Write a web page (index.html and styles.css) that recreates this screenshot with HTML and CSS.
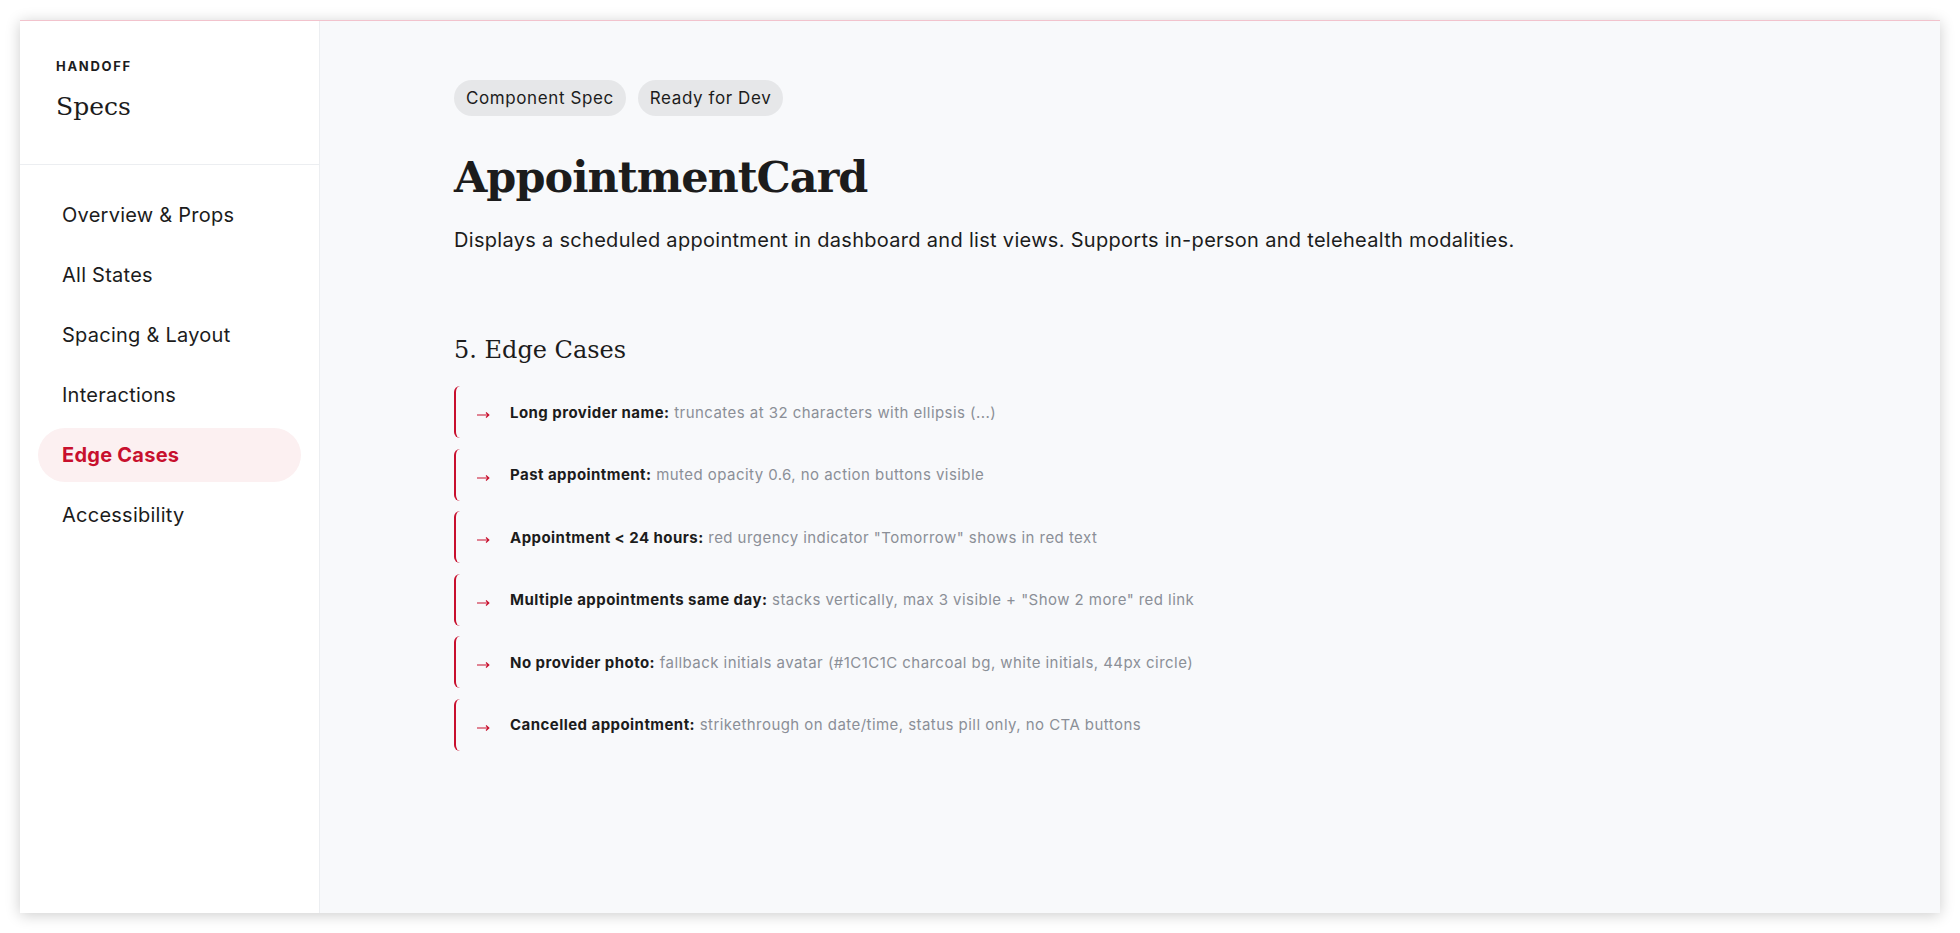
FILE: index.html
```html
<!DOCTYPE html>
<html lang="en">
<head>
    <meta charset="UTF-8">
    <meta name="viewport" content="width=device-width, initial-scale=1.0">
    <title>Handoff Specs - AppointmentCard</title>
    <link rel="stylesheet" href="styles.css">
</head>
<body>
    <div class="frame">
        <aside class="sidebar">
            <div class="brand">
                <div class="brand-label">HANDOFF</div>
                <div class="brand-title">Specs</div>
            </div>
            <nav class="nav">
                <a class="nav-item" href="#">Overview &amp; Props</a>
                <a class="nav-item" href="#">All States</a>
                <a class="nav-item" href="#">Spacing &amp; Layout</a>
                <a class="nav-item" href="#">Interactions</a>
                <a class="nav-item active" href="#">Edge Cases</a>
                <a class="nav-item" href="#">Accessibility</a>
            </nav>
        </aside>

        <main class="main">
            <div class="tags">
                <span class="tag">Component Spec</span>
                <span class="tag">Ready for Dev</span>
            </div>
            <h1>AppointmentCard</h1>
            <p class="lead">Displays a scheduled appointment in dashboard and list views. Supports in-person and telehealth modalities.</p>

            <section class="section">
                <h2>5. Edge Cases</h2>
                <ul class="cases">
                    <li class="case">
                        <svg class="arrow" width="13" height="8" viewBox="0 0 13 8"><path d="M0 4h11.5M9 1.5 11.8 4 9 6.5" /></svg>
                        <p><strong>Long provider name:</strong> truncates at 32 characters with ellipsis (...)</p>
                    </li>
                    <li class="case">
                        <svg class="arrow" width="13" height="8" viewBox="0 0 13 8"><path d="M0 4h11.5M9 1.5 11.8 4 9 6.5" /></svg>
                        <p><strong>Past appointment:</strong> muted opacity 0.6, no action buttons visible</p>
                    </li>
                    <li class="case">
                        <svg class="arrow" width="13" height="8" viewBox="0 0 13 8"><path d="M0 4h11.5M9 1.5 11.8 4 9 6.5" /></svg>
                        <p><strong>Appointment &lt; 24 hours:</strong> red urgency indicator "Tomorrow" shows in red text</p>
                    </li>
                    <li class="case">
                        <svg class="arrow" width="13" height="8" viewBox="0 0 13 8"><path d="M0 4h11.5M9 1.5 11.8 4 9 6.5" /></svg>
                        <p><strong>Multiple appointments same day:</strong> stacks vertically, max 3 visible + "Show 2 more" red link</p>
                    </li>
                    <li class="case">
                        <svg class="arrow" width="13" height="8" viewBox="0 0 13 8"><path d="M0 4h11.5M9 1.5 11.8 4 9 6.5" /></svg>
                        <p><strong>No provider photo:</strong> fallback initials avatar (#1C1C1C charcoal bg, white initials, 44px circle)</p>
                    </li>
                    <li class="case">
                        <svg class="arrow" width="13" height="8" viewBox="0 0 13 8"><path d="M0 4h11.5M9 1.5 11.8 4 9 6.5" /></svg>
                        <p><strong>Cancelled appointment:</strong> strikethrough on date/time, status pill only, no CTA buttons</p>
                    </li>
                </ul>
            </section>
        </main>
    </div>
</body>
</html>
```

FILE: styles.css
```css
body {
    margin: 0;
    padding: 20px;
    background: #ffffff;
    font-family: Inter, "Noto Sans", sans-serif;
    color: #1c1c1c;
}

.frame {
    display: flex;
    height: 892px;
    border-top: 1px solid #f2c3cd;
    background: #f8f9fb;
    box-shadow: 0 2px 14px rgba(0, 0, 0, 0.2);
}

.sidebar {
    width: 299px;
    flex-shrink: 0;
    background: #ffffff;
    border-right: 1px solid #eceef1;
}

.brand {
    height: 106px;
    padding: 37px 36px 0;
    border-bottom: 1px solid #eceef1;
}

.brand-label {
    font-size: 13px;
    font-weight: 700;
    letter-spacing: 1.7px;
    line-height: 16px;
}

.brand-title {
    margin-top: 18px;
    font-family: "DejaVu Serif", serif;
    font-size: 25px;
    line-height: 30px;
}

.nav {
    display: flex;
    flex-direction: column;
    gap: 6px;
    padding: 23px 18px;
}

.nav-item {
    display: block;
    height: 54px;
    line-height: 54px;
    padding: 0 24px;
    border-radius: 27px;
    font-size: 20px;
    letter-spacing: 0.25px;
    color: #1c1c1c;
    text-decoration: none;
}

.nav-item.active {
    background: #fcf0f1;
    color: #c8102e;
    font-weight: 700;
}

.main {
    flex: 1;
    padding: 59px 134px;
}

.tags {
    display: flex;
    gap: 12px;
}

.tag {
    height: 36px;
    line-height: 36px;
    padding: 0 12px;
    border-radius: 18px;
    background: #e6e7e9;
    font-size: 17px;
    letter-spacing: 0.6px;
}

h1 {
    margin: 33px 0 0;
    font-family: "DejaVu Serif", serif;
    font-size: 43px;
    font-weight: 700;
    line-height: 56px;
    letter-spacing: -1px;
}

.lead {
    margin: 21px 0 0;
    font-size: 20px;
    letter-spacing: 0.3px;
    line-height: 28px;
}

.section {
    margin-top: 79px;
}

h2 {
    margin: 0;
    font-family: "DejaVu Serif", serif;
    font-size: 24px;
    font-weight: 400;
    line-height: 34px;
}

.cases {
    list-style: none;
    margin: 19px 0 0;
    padding: 0;
    display: flex;
    flex-direction: column;
    gap: 10.5px;
}

.case {
    display: flex;
    align-items: center;
    height: 52px;
    padding-left: 21px;
    border-left: 2px solid #c8102e;
    border-radius: 6px;
}

.arrow {
    flex-shrink: 0;
    margin: 6px 20px 0 0;
    fill: none;
    stroke: #c8102e;
    stroke-width: 1.2;
}

.case p {
    margin: 0;
    font-size: 15px;
    letter-spacing: 0.45px;
    color: #8b8f97;
}

.case strong {
    color: #1c1c1c;
    font-weight: 700;
}
```
